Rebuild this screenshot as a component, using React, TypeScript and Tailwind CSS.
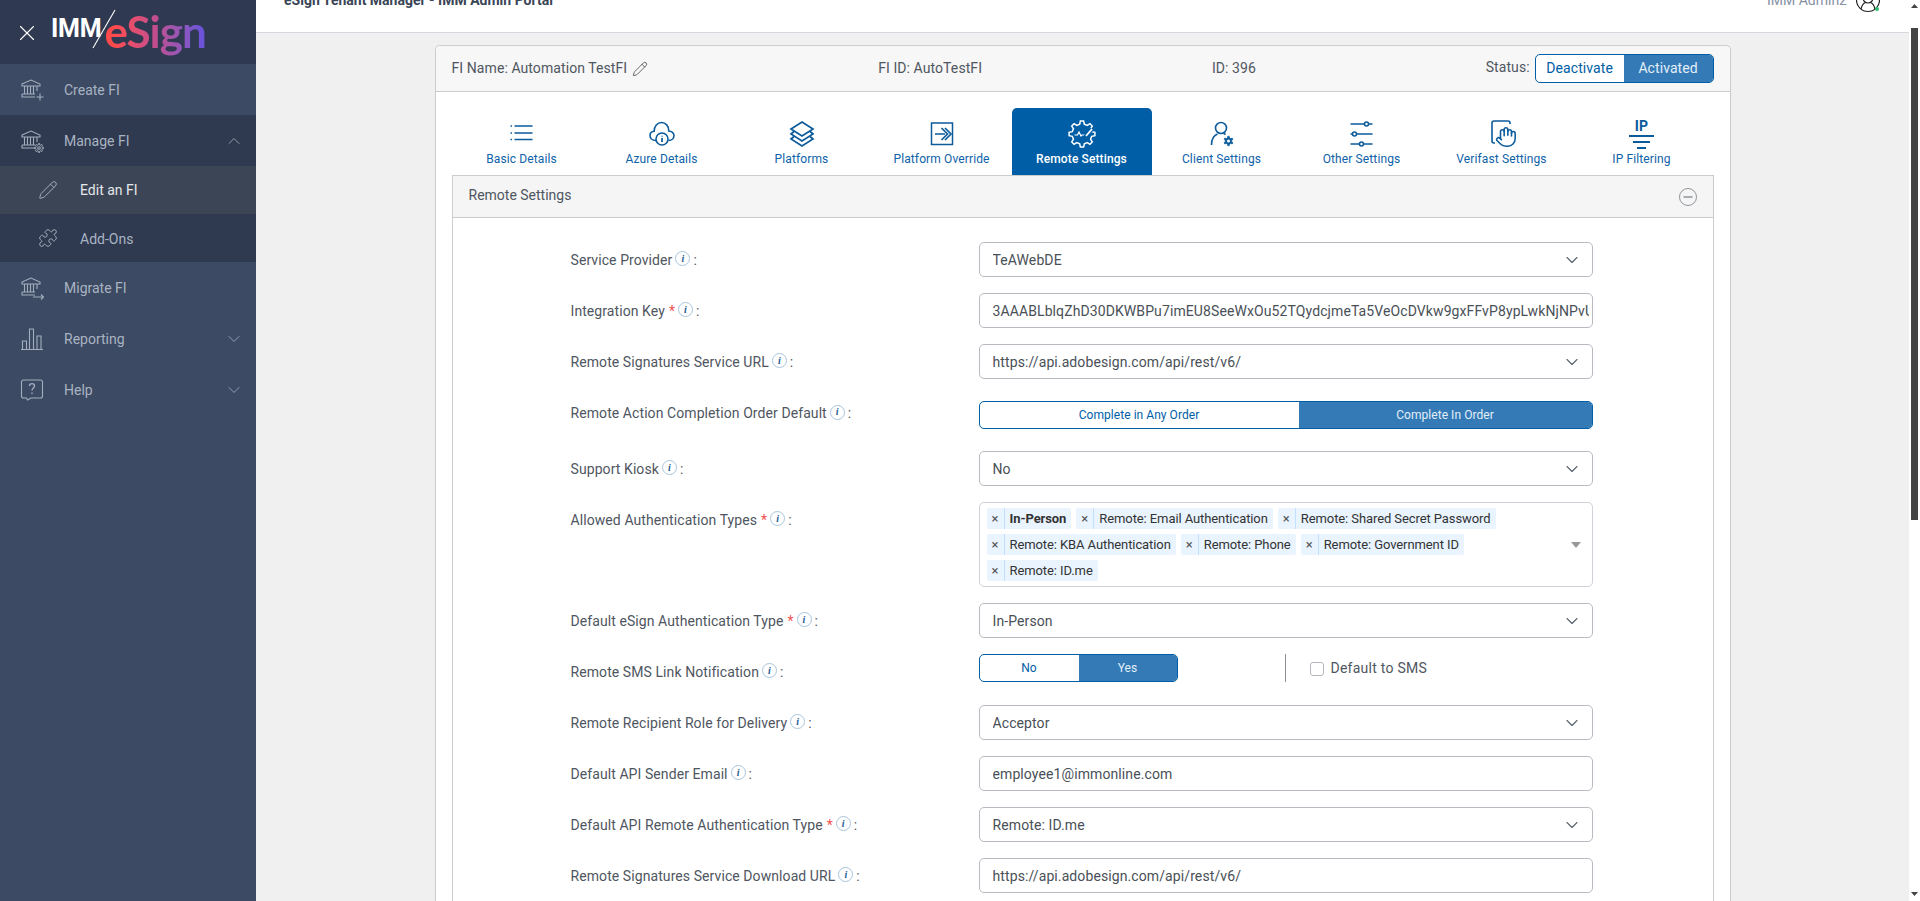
import React from "react";
import clsx from "clsx";
import { X, Pencil, Puzzle, ChevronDown, ChevronUp, Hand } from "lucide-react";

const gearPath = (cx: number, cy: number, inner: number, outer: number, teeth: number) => {
  const pts: string[] = [];
  for (let i = 0; i < teeth; i++) {
    const step = (Math.PI * 2) / teeth;
    const a = i * step - Math.PI / 2;
    const add = (ang: number, r: number) =>
      pts.push(`${(cx + Math.cos(ang) * r).toFixed(2)} ${(cy + Math.sin(ang) * r).toFixed(2)}`);
    add(a - step * 0.3, inner);
    add(a - step * 0.16, outer);
    add(a + step * 0.16, outer);
    add(a + step * 0.3, inner);
  }
  return `M${pts.join("L")}Z`;
};

// sidebar bank glyph, the extra bit in the corner differs per item
const BankIcon = ({ extra }: { extra: "plus" | "gear" | "arrow" }) => (
  <svg width="24" height="24" viewBox="0 0 24 24" fill="none" stroke="#a3adbc" strokeWidth="1.1">
    <path d="M2 6 11 2l9 4v2H2z" />
    <path d="M4.500 8v8M7.500 8v8M10.500 8v8M13.500 8v8M17 8v5" />
    <path d="M2 16h13M2 16v3h13" />
    {extra === "plus" && <path d="M20 15.500v7M16.500 19h7" />}
    {extra === "gear" && (
      <>
        <path d={gearPath(19, 19, 3.200, 4.500, 8)} strokeWidth="1" />
        <circle cx="19" cy="19" r="1.300" />
      </>
    )}
    {extra === "arrow" && <path d="M13 21h10.500M21 18.500l2.500 2.500-2.500 2.500" />}
  </svg>
);

const ChartIcon = () => (
  <svg width="24" height="24" viewBox="0 0 24 24" fill="none" stroke="#a3adbc" strokeWidth="1.1">
    <path d="M1 22.500h22M2.500 22.500V14h4v8.500M9.500 22.500V2h4v20.500M17 22.500V9h4v13.500" />
  </svg>
);

const HelpIcon = () => (
  <svg width="24" height="24" viewBox="0 0 24 24" fill="none" stroke="#a3adbc" strokeWidth="1.1">
    <path d="M3.500 2h17a2 2 0 0 1 2 2v14a2 2 0 0 1-2 2H11l-3.500 2-1-2H3.500a2 2 0 0 1-2-2V4a2 2 0 0 1 2-2z" />
    <path d="M9.500 8c0-3.200 5-3.200 5 0 0 2-2.500 2-2.500 4.500M12 14.500v1.500" strokeWidth="1.400" />
  </svg>
);

const TAB = "#0c5b9b";

const ListIcon = () => (
  <svg width="30" height="30" viewBox="0 0 30 30" fill="none" stroke="currentColor" strokeWidth="1.700">
    <path d="M7.500 7h18M7.500 14h18M7.500 20.500h18M3.500 7h1.500M3.500 14h1.500M3.500 20.500h1.500" />
  </svg>
);

const CloudIcon = () => (
  <svg width="30" height="30" viewBox="0 0 30 30" fill="none" stroke="currentColor" strokeWidth="1.600">
    <path d="M9 21.500C5 21.500 3 19 3 16.500c0-2.500 2-4 4.200-4.200C7 7 10.500 3.500 14.500 3.500c4 0 7.500 3.500 7.300 8.500 2.800 0 5.200 2 5.200 4.500 0 2.500-2 5-5.500 5" />
    <circle cx="15" cy="20" r="6" fill="#fff" />
    <path d="M15 19v4M15 16.700v.9" strokeWidth="1.700" />
  </svg>
);

const LayersIcon = () => (
  <svg width="30" height="30" viewBox="0 0 30 30" fill="none" stroke="currentColor" strokeWidth="1.700">
    <path d="M15 3 26 10 15 17 4 10z" />
    <path d="M7 12.500 4 15l11 7 11-7-3-2.500" />
    <path d="M7 17.500 4 20l11 7 11-7-3-2.500" />
  </svg>
);

const OverrideIcon = () => (
  <svg width="30" height="30" viewBox="0 0 30 30" fill="none" stroke="currentColor" strokeWidth="1.700">
    <rect x="4.500" y="4" width="21" height="21.500" strokeWidth="1.500" />
    <path d="M8 15h10M14.500 9l6 6-6 6M18 9l6 6-6 6" />
  </svg>
);

const RemoteGearIcon = () => (
  <svg width="30" height="30" viewBox="0 0 30 30" fill="none" stroke="currentColor" strokeWidth="1.500">
    <path d={gearPath(15, 15, 10, 13, 8)} />
    <path d="M7.500 16h3l1.500-3 2 4 1-1h3" strokeWidth="1.200" />
    <path d="M18 18l7-8" stroke="#005ea6" strokeWidth="4" />
    <path d="M19 17l6-7" strokeWidth="1.800" />
  </svg>
);

const ClientIcon = () => (
  <svg width="30" height="30" viewBox="0 0 30 30" fill="none" stroke="currentColor" strokeWidth="1.600">
    <circle cx="14" cy="9" r="5.500" />
    <path d="M4.500 26c0-6 2-9.500 6-11M17 14.500l1.500 1" />
    <path d={gearPath(21.500, 22, 3.300, 4.800, 6)} fill="currentColor" strokeWidth="0.6" />
    <circle cx="21.500" cy="22" r="1.500" fill="#fff" stroke="none" />
  </svg>
);

const SlidersIcon = () => (
  <svg width="30" height="30" viewBox="0 0 30 30" fill="none" stroke="currentColor" strokeWidth="1.600">
    <path d="M3.500 5h14M21.500 5h4M3.500 15h2M9.500 15h16M3.500 25h9M16.500 25h9" />
    <circle cx="19.500" cy="5" r="2" />
    <circle cx="7.500" cy="15" r="2" />
    <circle cx="14.500" cy="25" r="2" />
  </svg>
);

const VerifastIcon = () => (
  <div className="relative w-[30px] h-[30px]">
    <svg width="30" height="30" viewBox="0 0 30 30" fill="none" stroke="currentColor" strokeWidth="1.600">
      <path d="M23 5V4a2 2 0 0 0-2-2H7a2 2 0 0 0-2 2v18a2 2 0 0 0 2 2h2" />
    </svg>
    <Hand size={22} strokeWidth={1.700} className="absolute left-[8px] top-[7px] bg-white" />
  </div>
);

const IpIcon = () => (
  <div className="flex flex-col items-center w-[30px] h-[30px]">
    <span className="text-[14px] leading-[14px] font-bold">IP</span>
    <div className="w-[25px] h-[2px] mt-[2px] bg-current" />
    <div className="w-[17px] h-[2px] mt-[4px] bg-current" />
    <div className="w-[9px] h-[2px] mt-[4px] bg-current" />
  </div>
);

const tabs: { label: string; icon: React.ReactNode; active?: boolean }[] = [
  { label: "Basic Details", icon: <ListIcon /> },
  { label: "Azure Details", icon: <CloudIcon /> },
  { label: "Platforms", icon: <LayersIcon /> },
  { label: "Platform Override", icon: <OverrideIcon /> },
  { label: "Remote Settings", icon: <RemoteGearIcon />, active: true },
  { label: "Client Settings", icon: <ClientIcon /> },
  { label: "Other Settings", icon: <SlidersIcon /> },
  { label: "Verifast Settings", icon: <VerifastIcon /> },
  { label: "IP Filtering", icon: <IpIcon /> },
];

const NavItem = ({
  icon,
  label,
  chevron,
  className,
}: {
  icon: React.ReactNode;
  label: string;
  chevron?: "up" | "down";
  className?: string;
}) => (
  <div className={clsx("flex items-center h-[51px] pl-[20px] pr-[12px] text-[#a9b3c2]", className)}>
    <div className="w-[44px] shrink-0">{icon}</div>
    <span className="flex-1 pt-[1px]">{label}</span>
    {chevron === "up" && <ChevronUp size={20} strokeWidth={1.100} className="text-[#9aa5b6]" />}
    {chevron === "down" && <ChevronDown size={20} strokeWidth={1.100} className="text-[#9aa5b6]" />}
  </div>
);

const Sidebar = () => (
  <aside className="w-[256px] shrink-0 bg-[#3c4a63] text-[14px]">
    <div className="relative flex items-center h-[64px] bg-[#2f3a52] pl-[14px]">
      <X size={26} strokeWidth={1} className="text-white shrink-0 mt-[1px]" />
      <span className="ml-[11px] mb-[7px] text-[25px] leading-[30px] font-bold text-white tracking-[-0.2px]">IMM</span>
      <span className="ml-[3px] mb-[2px] font-['Lato',sans-serif] font-bold tracking-[-1px] text-[44px] leading-[52px] bg-linear-to-r from-[#ff4a4c] from-10% via-[#c24d8e] via-50% to-[#6c53d8] to-95% bg-clip-text text-transparent">
        eSign
      </span>
      <svg className="absolute left-[90px] top-[8px]" width="28" height="42" viewBox="0 0 28 42">
        <path d="M25 2 3 40" stroke="#fff" strokeWidth="1.100" />
      </svg>
    </div>
    <NavItem icon={<BankIcon extra="plus" />} label="Create FI" />
    <NavItem icon={<BankIcon extra="gear" />} label="Manage FI" chevron="up" className="bg-[#2f3a50]" />
    <div className="flex items-center h-[48px] pl-[40px] bg-[#3b4555] text-[#e4e7eb]">
      <Pencil strokeWidth={1.200} className="w-[40px] h-[20px] shrink-0 text-[#a3adbc] -ml-[12px] mr-[12px]" />
      <span className="pt-[1px]">Edit an FI</span>
    </div>
    <div className="flex items-center h-[48px] pl-[40px] bg-[#2f3a50] text-[#a9b3c2]">
      <Puzzle strokeWidth={1.200} className="w-[40px] h-[20px] shrink-0 text-[#a3adbc] -ml-[12px] mr-[12px]" />
      <span className="pt-[2px]">Add-Ons</span>
    </div>
    <NavItem icon={<BankIcon extra="arrow" />} label="Migrate FI" />
    <NavItem icon={<ChartIcon />} label="Reporting" chevron="down" />
    <NavItem icon={<HelpIcon />} label="Help" chevron="down" />
  </aside>
);

const InfoDot = () => (
  <span className="inline-flex items-center justify-center w-[15px] h-[15px] ml-[3px] -mt-[3px] rounded-full border border-[#a8c5dc] font-['Liberation_Serif',serif] italic font-bold text-[10px] leading-none text-[#1d5c93]">
    i
  </span>
);

const FormRow = ({
  label,
  required,
  children,
  className,
  labelClass = "pt-[1px]",
}: {
  label: string;
  required?: boolean;
  children: React.ReactNode;
  className?: string;
  labelClass?: string;
}) => (
  <div className={clsx("flex items-start", className)}>
    <div className={clsx("w-[408px] shrink-0 flex items-center h-[35px] tracking-[0.08px] text-[#4f5661]", labelClass)}>
      <span>{label}</span>
      {required && <span className="ml-[4px] text-[#ef5350]">*</span>}
      <InfoDot />
      <span className="ml-[3px]">:</span>
    </div>
    {children}
  </div>
);

const Field = ({ value, select }: { value: string; select?: boolean }) => (
  <div className="flex items-center w-[614px] h-[35px] pl-[13px] pr-[3px] border border-[#b8bbc2] rounded-[5px] bg-white tracking-[0.1px] text-[#495057]">
    <span className="flex-1 pt-[1px] overflow-hidden whitespace-nowrap">{value}</span>
    {select && <ChevronDown size={20} strokeWidth={1.400} className="text-[#5d6670] mr-[7px] ml-[8px] shrink-0" />}
  </div>
);

const Toggle = ({
  left,
  right,
  leftWidth,
  rightWidth,
  textClass,
}: {
  left: string;
  right: string;
  leftWidth: string;
  rightWidth: string;
  textClass: string;
}) => (
  <div className={clsx("flex rounded-[5px] border border-[#005ea6] overflow-hidden bg-white", textClass)}>
    <div className={clsx("flex items-center justify-center text-[#005ea6]", leftWidth)}>{left}</div>
    <div className={clsx("flex items-center justify-center bg-[#337ab7] text-[#e3eef7]", rightWidth)}>{right}</div>
  </div>
);

const Chip = ({ text, bold }: { text: string; bold?: boolean }) => (
  <div className="flex items-center h-[21px] rounded-[2px] bg-[#e9f4ff] text-[13px] tracking-[-0.09px] text-[#333]">
    <span className="flex items-center justify-center w-[18px] h-full border-r border-[#c2e0ff] text-[#555] text-[13px]">×</span>
    <span className={clsx("pl-[5px] pr-[5px]", bold && "font-bold")}>{text}</span>
  </div>
);

const chipRows = [
  [{ text: "In-Person", bold: true }, { text: "Remote: Email Authentication" }, { text: "Remote: Shared Secret Password" }],
  [{ text: "Remote: KBA Authentication" }, { text: "Remote: Phone" }, { text: "Remote: Government ID" }],
  [{ text: "Remote: ID.me" }],
];

const MultiSelect = () => (
  <div className="flex items-center w-[614px] h-[85px] pl-[7px] pr-[11px] border border-[#cfd2d8] rounded-[5px] bg-white">
    <div className="flex-1 flex flex-col gap-[5px]">
      {chipRows.map((row, i) => (
        <div key={i} className="flex gap-[5px]">
          {row.map((c) => (
            <Chip key={c.text} text={c.text} bold={c.bold} />
          ))}
        </div>
      ))}
    </div>
    <svg width="10" height="6" viewBox="0 0 10 6">
      <path d="M0 0h10L5 6z" fill="#999" />
    </svg>
  </div>
);

const Tabs = () => (
  <div className="flex h-[67px]">
    {tabs.map((t) => (
      <div
        key={t.label}
        className={clsx(
          "flex flex-col items-center w-[140px] pt-[11px] text-[12px] leading-[16px] tracking-[0.12px]",
          t.active ? "bg-[#005ea6] text-white rounded-t-[5px] font-medium" : "text-[#0f62a8]",
        )}
      >
        <div className="h-[30px] mb-[2px]" style={{ color: t.active ? undefined : TAB }}>
          {t.icon}
        </div>
        <span>{t.label}</span>
      </div>
    ))}
  </div>
);

const RemotePanel = () => (
  <div className="border border-[#ccc] border-b-0 bg-white">
    <div className="flex items-center justify-between h-[42px] pl-[16px] pr-[16px] bg-[#f5f5f5] border-b border-[#ccc] text-[#4f5661]">
      <span className="pb-[2px]">Remote Settings</span>
      <svg width="18" height="18" viewBox="0 0 18 18" fill="none">
        <circle cx="9" cy="9" r="8.500" stroke="#8f9499" />
        <path d="M4.500 9h9" stroke="#8f9499" strokeWidth="1.500" />
      </svg>
    </div>
    <div className="flex flex-col pt-[24px] pb-4 pl-[118px]">
      <FormRow label="Service Provider" className="mb-4">
        <Field value="TeAWebDE" select />
      </FormRow>
      <FormRow label="Integration Key" required className="mb-4">
        <Field value="3AAABLblqZhD30DKWBPu7imEU8SeeWxOu52TQydcjmeTa5VeOcDVkw9gxFFvP8ypLwkNjNPvUxTyQ" />
      </FormRow>
      <FormRow label="Remote Signatures Service URL" className="mb-[22px]">
        <Field value="https://api.adobesign.com/api/rest/v6/" select />
      </FormRow>
      <FormRow label="Remote Action Completion Order Default" className="mb-[15px]" labelClass="pb-[10px]">
        <Toggle
          left="Complete in Any Order"
          right="Complete In Order"
          leftWidth="w-[319px]"
          rightWidth="w-[293px]"
          textClass="h-[28px] text-[12px] tracking-[0.05px]"
        />
      </FormRow>
      <FormRow label="Support Kiosk" className="mb-4">
        <Field value="No" select />
      </FormRow>
      <FormRow label="Allowed Authentication Types" required className="mb-4">
        <MultiSelect />
      </FormRow>
      <FormRow label="Default eSign Authentication Type" required className="mb-4">
        <Field value="In-Person" select />
      </FormRow>
      <FormRow label="Remote SMS Link Notification" className="mb-4">
        <Toggle left="No" right="Yes" leftWidth="w-[99px]" rightWidth="w-[98px]" textClass="h-[28px] text-[12px]" />
        <div className="w-px h-[28px] ml-[107px] bg-[#8c9096]" />
        <label className="flex items-center h-[28px] ml-[24px] pt-[1px] tracking-[0.25px] text-[#4f5661]">
          <span className="w-[14px] h-[14px] mr-[7px] border border-[#b4b7bd] rounded-[3px] bg-white" />
          Default to SMS
        </label>
      </FormRow>
      <FormRow label="Remote Recipient Role for Delivery" className="mb-4">
        <Field value="Acceptor" select />
      </FormRow>
      <FormRow label="Default API Sender Email" className="mb-4">
        <Field value="employee1@immonline.com" />
      </FormRow>
      <FormRow label="Default API Remote Authentication Type" required className="mb-4">
        <Field value="Remote: ID.me" select />
      </FormRow>
      <FormRow label="Remote Signatures Service Download URL">
        <Field value="https://api.adobesign.com/api/rest/v6/" />
      </FormRow>
    </div>
  </div>
);

const CardHeader = () => (
  <div className="flex items-center h-[46px] px-4 bg-[#f7f7f7] border-b border-[#ccc] rounded-t-[5px] tracking-[0.08px] text-[#4f5661]">
    <div className="flex items-center w-[427px]">
      <span>FI Name: Automation TestFI</span>
      <Pencil size={16} strokeWidth={1.200} className="ml-[5px] text-[#444]" />
    </div>
    <div className="w-[334px]">FI ID: AutoTestFI</div>
    <div className="w-[274px]">ID: 396</div>
    <span className="mr-[5px] -mt-[3px]">Status:</span>
    <Toggle left="Deactivate" right="Activated" leftWidth="w-[88px]" rightWidth="w-[89px]" textClass="h-[29px] text-[14px]" />
  </div>
);

const Scrollbar = () => (
  <div className="flex flex-col items-center w-[11px] shrink-0 pt-[4px] pb-[5px] bg-white">
    <svg width="7" height="4" viewBox="0 0 7 4">
      <path d="M0 4h7L3.500 0z" fill="#444" />
    </svg>
    <div className="w-[7px] h-[492px] mt-[20px] bg-[#444]" />
    <svg className="mt-auto" width="7" height="4" viewBox="0 0 7 4">
      <path d="M0 0h7L3.500 4z" fill="#444" />
    </svg>
  </div>
);

export default function App() {
  return (
    <div className="flex h-[901px] overflow-hidden font-['Roboto',sans-serif] text-[14px]">
      <Sidebar />
      <main className="flex-1 min-w-0 bg-[#f0f0f0]">
        <header className="flex items-start justify-between h-[33px] pl-[28px] pr-[29px] bg-white border-b border-[#d5d8de] overflow-hidden">
          <span className="-mt-[10px] font-bold text-[#3a4556]">eSign Tenant Manager - IMM Admin Portal</span>
          <div className="flex items-start">
            <span className="-mt-[10px] text-[#8791a3]">IMM Admin2</span>
            <svg className="ml-[9px]" width="24" height="13" viewBox="0 0 24 13" fill="none" stroke="#222" strokeWidth="1.200">
              <circle cx="12" cy="0" r="11.500" />
              <circle cx="12" cy="-2" r="5" />
              <path d="M5 9c1-4 3-6 4.500-6.500M19 9c-1-4-3-6-4.500-6.500" />
              <circle cx="21" cy="9" r="2" fill="#2fbf71" stroke="none" />
            </svg>
          </div>
        </header>
        <div className="w-[1296px] mx-auto mt-[12px] border border-[#ccc] border-b-0 rounded-t-[5px] bg-white">
          <CardHeader />
          <div className="px-4 pt-[16px]">
            <Tabs />
            <RemotePanel />
          </div>
        </div>
      </main>
      <Scrollbar />
    </div>
  );
}
